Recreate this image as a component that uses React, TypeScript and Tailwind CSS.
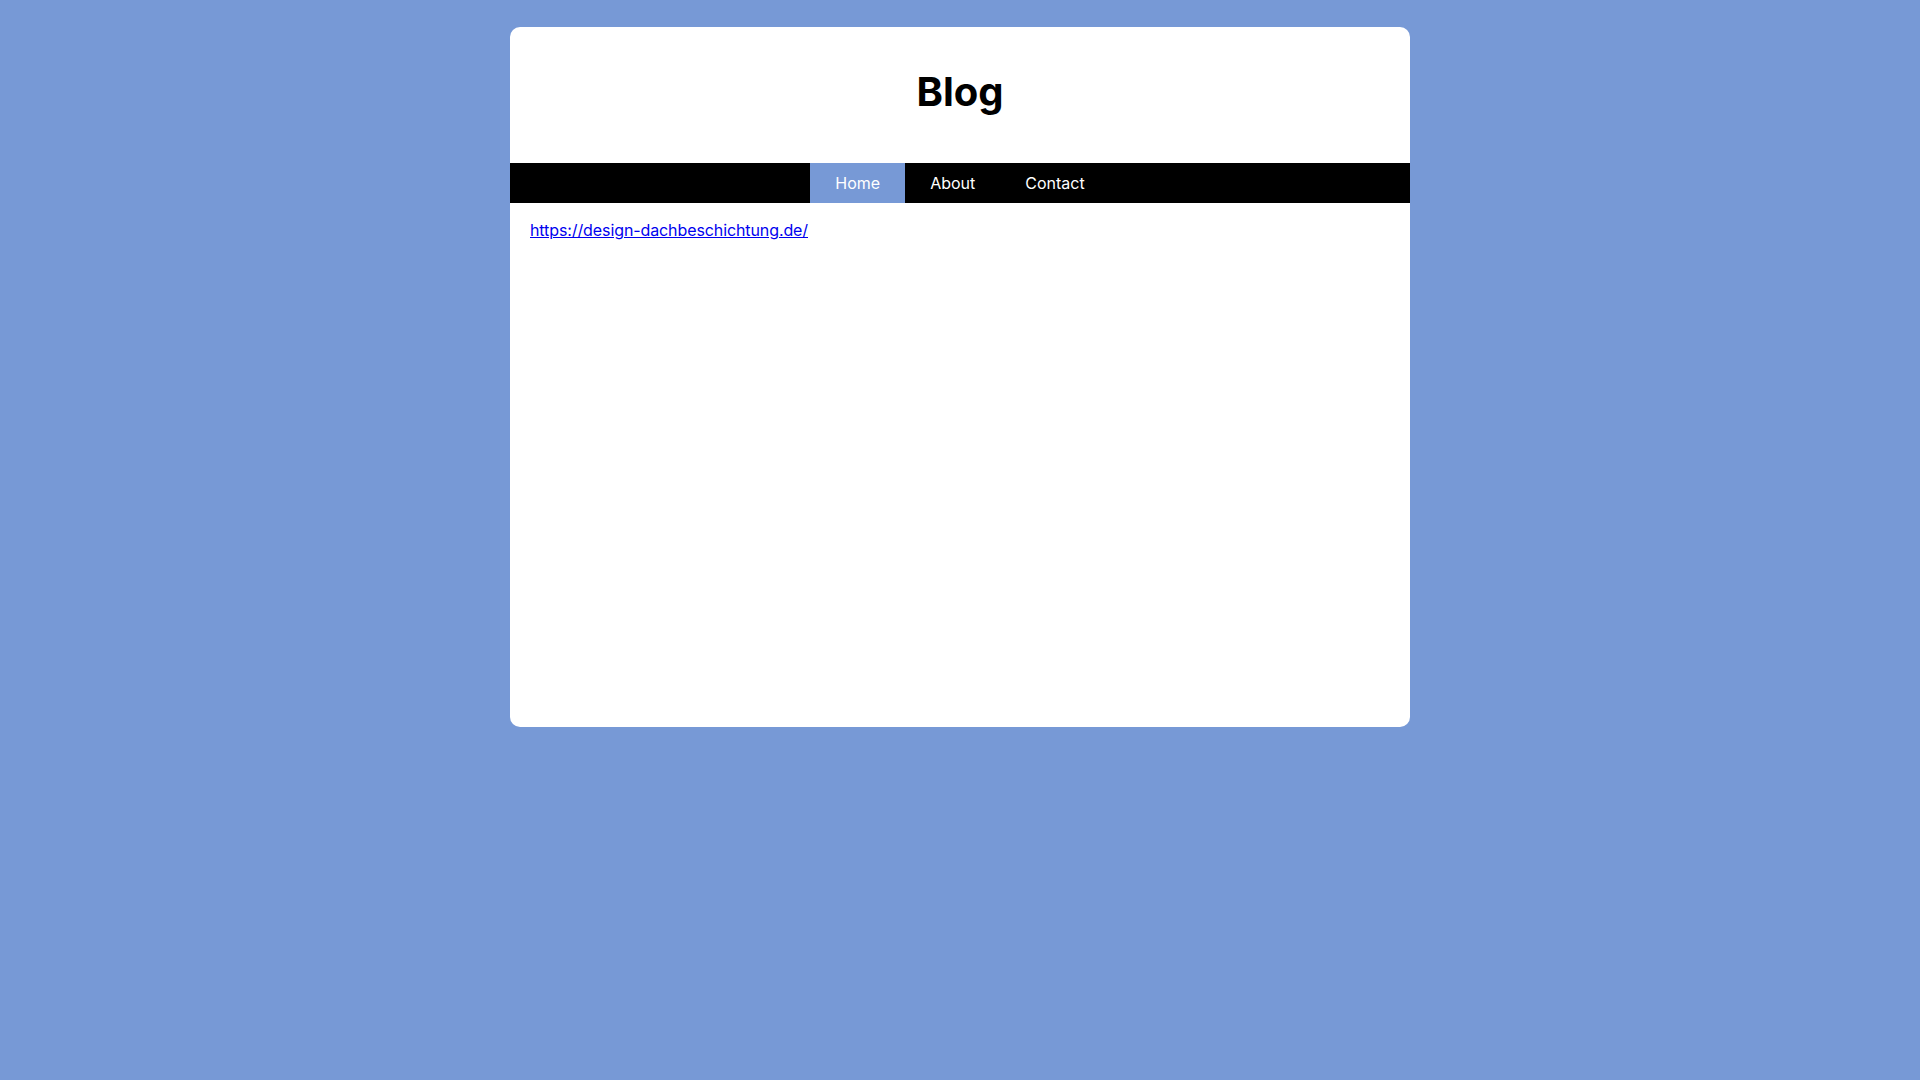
export default function App() {
  const links = ["Home", "About", "Contact"];

  return (
    <div className="min-h-screen bg-[#7799d6] pt-[27px] font-['Inter',sans-serif]">
      <div className="mx-auto flex h-[700px] w-[900px] flex-col overflow-hidden rounded-[10px] bg-white">
        <header className="flex h-[136px] items-center justify-center pb-[6px]">
          <h1 className="text-[40px] font-bold leading-none text-black">Blog</h1>
        </header>

        <nav className="flex h-[40px] justify-center bg-black">
          {links.map((l, i) => (
            <a
              key={l}
              href="#"
              className={`flex items-center px-[25px] text-[16px] text-white ${
                i === 0 ? "bg-[#7799d6]" : ""
              }`}
            >
              {l}
            </a>
          ))}
        </nav>

        <main className="px-5 pt-[15px]">
          <a
            href="https://design-dachbeschichtung.de/"
            className="text-[16px] leading-[1.2] tracking-[-0.1px] text-[#0000ee] underline"
          >
            https://design-dachbeschichtung.de/
          </a>
        </main>
      </div>
    </div>
  );
}
